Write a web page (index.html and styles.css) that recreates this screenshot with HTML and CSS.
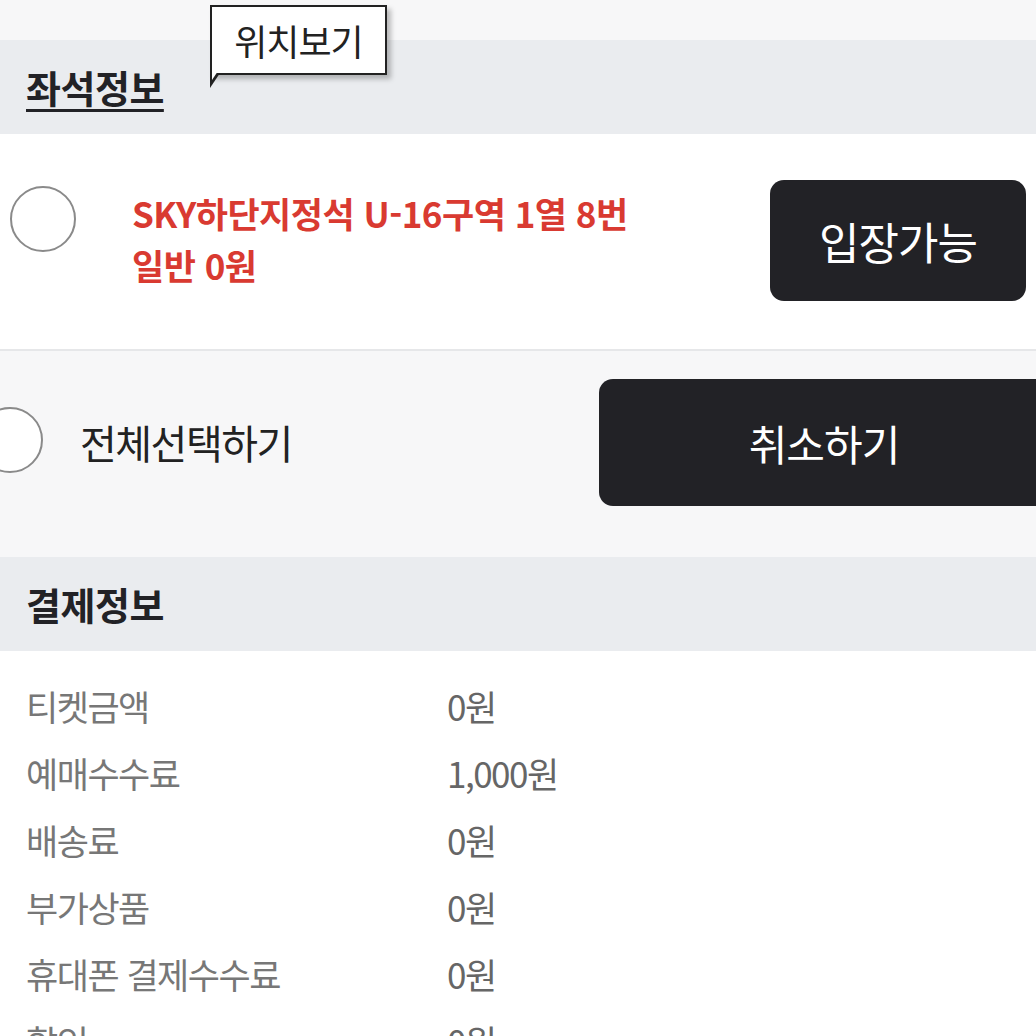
FILE: index.html
```html
<!DOCTYPE html>
<html lang="ko">
<head>
<meta charset="utf-8">
<link rel="stylesheet" href="styles.css">
</head>
<body>
<div class="page">
  <div class="topstrip"></div>
  <div class="section-head">
    <h2 class="title underline">좌석정보</h2>
    <div class="tooltip">위치보기<span class="tail"></span></div>
  </div>
  <div class="seat-row">
    <span class="radio"></span>
    <div class="seat-text">
      <div>SKY하단지정석 U-16구역 1열 8번</div>
      <div>일반 0원</div>
    </div>
    <button class="btn btn-enter">입장가능</button>
  </div>
  <div class="select-row">
    <span class="radio radio-all"></span>
    <span class="select-label">전체선택하기</span>
    <button class="btn btn-cancel">취소하기</button>
  </div>
  <div class="section-head">
    <h2 class="title">결제정보</h2>
  </div>
  <div class="pay-list">
    <div class="pay-row"><span class="pay-label">티켓금액</span><span class="pay-value">0원</span></div>
    <div class="pay-row"><span class="pay-label">예매수수료</span><span class="pay-value">1,000원</span></div>
    <div class="pay-row"><span class="pay-label">배송료</span><span class="pay-value">0원</span></div>
    <div class="pay-row"><span class="pay-label">부가상품</span><span class="pay-value">0원</span></div>
    <div class="pay-row"><span class="pay-label">휴대폰 결제수수료</span><span class="pay-value">0원</span></div>
    <div class="pay-row"><span class="pay-label">할인</span><span class="pay-value">0원</span></div>
  </div>
</div>
</body>
</html>
```
FILE: styles.css
```css
html, body {
  margin: 0;
  padding: 0;
  background: #ffffff;
  font-family: "Noto Sans CJK KR", "Noto Sans", sans-serif;
  overflow: hidden;
}
.page {
  width: 1036px;
  height: 1036px;
  overflow: hidden;
}
.topstrip {
  height: 40px;
  background: #f7f7f8;
}
.section-head {
  position: relative;
  height: 94px;
  background: #eaecef;
  display: flex;
  align-items: center;
  padding-left: 26px;
}
.title {
  margin: 0;
  font-size: 38px;
  font-weight: 700;
  color: #222226;
  letter-spacing: -0.5px;
  line-height: 1;
}
.underline {
  text-decoration: underline;
  text-decoration-thickness: 3px;
  text-underline-offset: 6px;
}
.tooltip {
  position: absolute;
  left: 210px;
  top: -35px;
  width: 173px;
  height: 66px;
  border: 2px solid #222;
  background: #fff;
  box-shadow: 4px 4px 5px rgba(0,0,0,0.25);
  font-size: 36px;
  color: #222;
  display: flex;
  align-items: center;
  justify-content: center;
  letter-spacing: -1px;
}
.tail {
  position: absolute;
  left: -2px;
  top: 66px;
  width: 0;
  height: 0;
  border-left: 10px solid #222;
  border-bottom: 15px solid transparent;
}
.tail::after {
  content: "";
  position: absolute;
  left: -8px;
  top: -2px;
  border-left: 6px solid #fff;
  border-bottom: 9px solid transparent;
}
.seat-row {
  background: #fff;
  display: flex;
  align-items: center;
  border-bottom: 2px solid #e6e7e9;
  box-sizing: border-box;
  height: 217px;
}
.radio {
  width: 62px;
  height: 62px;
  border: 2px solid #8a8a8a;
  border-radius: 50%;
  background: #fff;
  flex: none;
}
.seat-row .radio {
  margin-left: 10px;
  margin-top: -46px;
}
.seat-text {
  margin-left: 56px;
  color: #d93a31;
  font-weight: 700;
  font-size: 35px;
  letter-spacing: -0.5px;
  line-height: 52px;
  flex: 1;
  margin-top: -6px;
}
.btn {
  border: none;
  background: #222226;
  color: #fff;
  font-family: inherit;
  border-radius: 14px;
  padding: 0;
}
.btn-enter {
  width: 256px;
  height: 121px;
  font-size: 44px;
  letter-spacing: -1px;
  margin-right: 10px;
  margin-top: -2px;
}
.select-row {
  height: 206px;
  background: #f7f7f8;
  display: flex;
  align-items: center;
}
.radio-all {
  margin-left: -23px;
  margin-top: -28px;
  background: #fff;
}
.select-label {
  margin-left: 37px;
  font-size: 40px;
  color: #222;
  letter-spacing: -1.5px;
  flex: 1;
  margin-top: -24px;
}
.btn-cancel {
  width: 450px;
  height: 127px;
  font-size: 42px;
  letter-spacing: -1px;
  margin-right: -13px;
  margin-top: -24px;
}
.pay-list {
  padding-top: 21px;
}
.pay-row {
  display: flex;
  height: 67px;
  align-items: center;
  padding-left: 26px;
  font-size: 35px;
  color: #777;
  letter-spacing: -1.5px;
}
.pay-label {
  width: 421px;
}
.pay-value {
  color: #666;
}
```
